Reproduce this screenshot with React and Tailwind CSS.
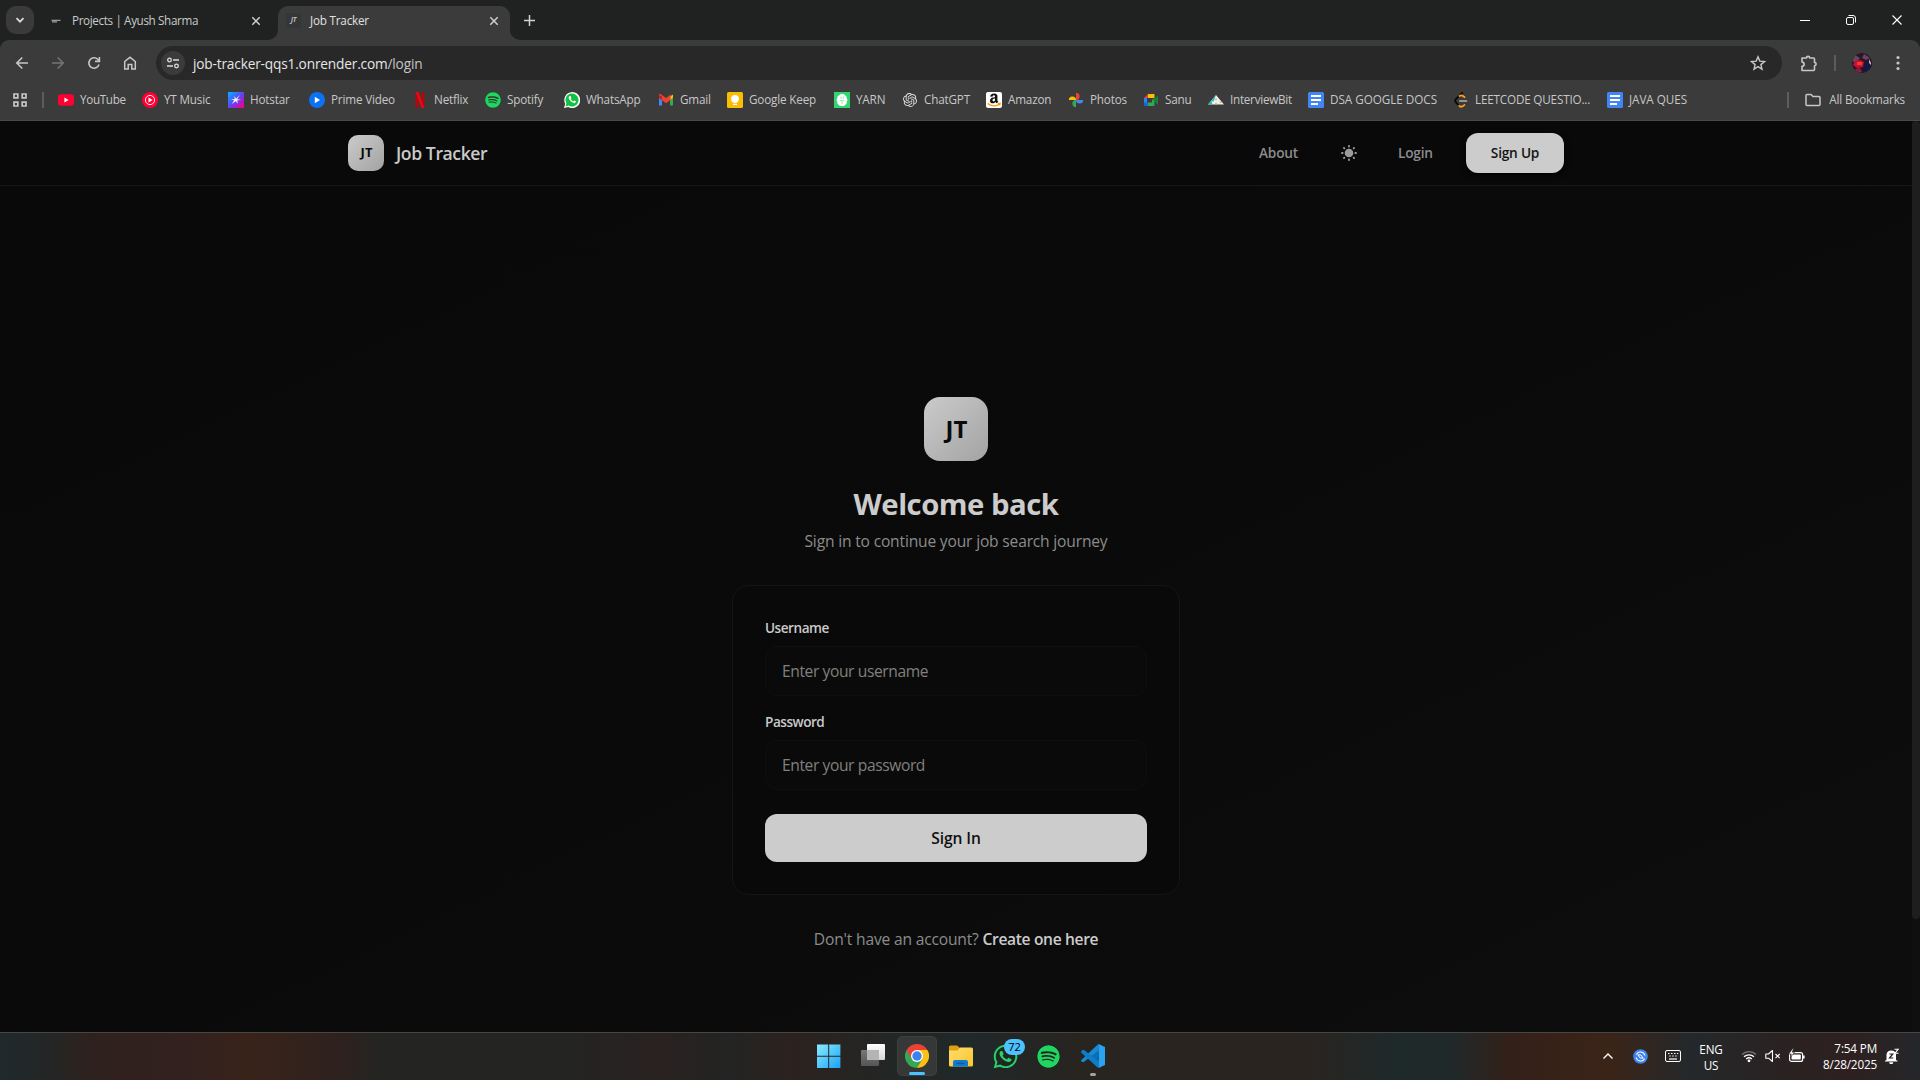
import React from "react";
import { FaSpotify, FaWhatsapp, FaAmazon } from "react-icons/fa";
import { SiOpenai } from "react-icons/si";

const Svg = ({ size = 16, box = size, className = "", children }) => (
  <svg width={size} height={size} viewBox={`0 0 ${box} ${box}`} fill="none" className={`shrink-0 ${className}`}>
    {children}
  </svg>
);

const CloseIcon = () => (
  <Svg size={10} className="text-[#d0d0d0]">
    <path d="M1.3 1.3l7.4 7.4M8.7 1.3L1.3 8.7" stroke="currentColor" strokeWidth="1.5" />
  </Svg>
);

function TabStrip() {
  return (
    <div className="flex h-10 items-end bg-[#202221] text-[11.7px] tracking-[-0.2px] text-[#c9cbca]">
      <button className="mb-[6px] ml-[6px] flex size-7 items-center justify-center rounded-[10px] bg-[#3a3a3a]">
        <Svg size={10}><path d="M1.5 3.2L5 6.7l3.5-3.5" stroke="#dcdcdc" strokeWidth="1.7" /></Svg>
      </button>
      <div className="flex h-[34px] w-[244px] items-center pb-[5px]">
        <Svg size={16} className="ml-[14px]">
          <path d="M3.5 7.3h9M4 8.8h5" stroke="#9a9a9a" strokeWidth="1.2" />
        </Svg>
        <span className="ml-[8px] flex-1 tracking-[-0.37px]">Projects | Ayush Sharma</span>
        <span className="mr-[17px]"><CloseIcon /></span>
      </div>
      <div className="relative flex h-[34px] w-[232px] items-center rounded-t-[10px] bg-[#3b3b3b] pb-[5px] text-[#e0e0e0]">
        <Svg size={10} className="absolute bottom-0 left-[-10px]"><path d="M10 0v10H0A10 10 0 0 0 10 0z" fill="#3b3b3b" /></Svg>
        <Svg size={10} className="absolute right-[-10px] bottom-0"><path d="M0 0v10h10A10 10 0 0 1 0 0z" fill="#3b3b3b" /></Svg>
        <span className="ml-[8px] flex size-[15px] items-center justify-center rounded-[2px] bg-[#343638] text-[7px] font-bold text-[#b8b8b8] italic">JT</span>
        <span className="ml-[9px] flex-1">Job Tracker</span>
        <span className="mr-[11px]"><CloseIcon /></span>
      </div>
      <span className="mb-[14px] ml-[14px]">
        <Svg size={11}><path d="M5.5 0v11M0 5.5h11" stroke="#d0d0d0" strokeWidth="1.5" /></Svg>
      </span>
      <div className="ml-auto flex h-10 items-center">
        <span className="flex w-[46px] justify-center"><Svg size={10}><path d="M0 5.5h10" stroke="#fff" /></Svg></span>
        <span className="flex w-[46px] justify-center">
          <Svg size={10}>
            <rect x=".5" y="2.5" width="7" height="7" rx="1.5" stroke="#fff" />
            <path d="M2.5 .5H7A2.5 2.5 0 0 1 9.5 3v4.5" stroke="#fff" />
          </Svg>
        </span>
        <span className="flex w-[46px] justify-center"><Svg size={10}><path d="M.5 .5l9 9M9.5 .5l-9 9" stroke="#fff" strokeWidth="1.1" /></Svg></span>
      </div>
    </div>
  );
}

function Toolbar() {
  return (
    <div className="bg-[#202221]">
      <div className="flex h-[46px] items-center rounded-t-[9px] bg-[#3b3b3b] text-[#c7c7c7]">
        <Svg size={14} className="ml-[15px]"><path d="M13 7H2M7.3 1.5L1.8 7l5.5 5.5" stroke="currentColor" strokeWidth="1.6" /></Svg>
        <Svg size={14} className="ml-[22px] text-[#757575]"><path d="M1 7h11M6.7 1.5L12.2 7l-5.5 5.5" stroke="currentColor" strokeWidth="1.6" /></Svg>
        <Svg size={14} className="ml-[22px]">
          <path d="M12 8.6A5.2 5.2 0 1 1 10.7 3.3L12.3 5" stroke="currentColor" strokeWidth="1.6" />
          <path d="M12.4 1v4.4H8" stroke="currentColor" strokeWidth="1.6" />
        </Svg>
        <Svg size={14} className="ml-[22px]">
          <path d="M1.7 5.5L7 1.3l5.3 4.2V13H8.8V8.6H5.2V13H1.7z" stroke="currentColor" strokeWidth="1.5" />
        </Svg>
        <div className="ml-[19px] flex h-[34px] w-[1626px] items-center rounded-full bg-[#282828]">
          <span className="ml-[5px] flex size-6 items-center justify-center rounded-full bg-[#3b3b3b]">
            <Svg size={14}>
              <circle cx="3.5" cy="4" r="1.8" stroke="#dedede" strokeWidth="1.3" />
              <path d="M7 4h6M1 10h6" stroke="#dedede" strokeWidth="1.4" />
              <circle cx="10.5" cy="10" r="1.8" stroke="#dedede" strokeWidth="1.3" />
            </Svg>
          </span>
          <span className="ml-[8px] flex-1 pt-px text-[13.7px] leading-5 tracking-[-0.18px] text-[#e6e6e6]">
            job-tracker-qqs1.onrender.com<span className="text-[#c4c4c4]">/login</span>
          </span>
          <Svg size={16} className="mr-[16px]">
            <path d="M8 1.8l1.8 4.3 4.7.4-3.6 3.1 1.1 4.6L8 11.7l-4 2.5 1.1-4.6L1.5 6.5l4.7-.4z" stroke="currentColor" strokeWidth="1.4" />
          </Svg>
        </div>
        <Svg size={18} className="mb-px ml-[18px]">
          <path d="M2 4h4.5a1.6 1.6 0 0 1 3.2 0H13.5a1 1 0 0 1 1 1v3.5a1.6 1.6 0 0 1 0 3.2V15.500a1 1 0 0 1-1 1H2v-4.200a2.100 2.100 0 0 0 0-4.200z" stroke="currentColor" strokeWidth="1.6" strokeLinejoin="round" />
        </Svg>
        <span className="ml-[16px] h-4 w-[2px] bg-[#5c5c5c]" />
        <Svg size={20} className="ml-[16px] overflow-hidden rounded-full">
          <rect width="20" height="20" fill="#2c1429" />
          <path d="M3 2l5 3-4 5-4-2zM12 1l6 4-4 2-4-2z" fill="#63465f" />
          <path d="M3 8l5-1 4 2-1 5-6 1-4-3z" fill="#c5122c" />
          <path d="M5 9h5v3H5z" fill="#ff3534" />
          <path d="M12 11l6-3 2 6-6 5-4-2z" fill="#14193e" />
          <path d="M3 16l5-1 2 4-5 1z" fill="#8f1b45" />
          <path d="M17 6l2 4v2l-2-2z" fill="#c9b4d6" />
        </Svg>
        <Svg size={16} className="ml-[18px]">
          <circle cx="8" cy="2.5" r="1.6" fill="currentColor" />
          <circle cx="8" cy="8" r="1.6" fill="currentColor" />
          <circle cx="8" cy="13.5" r="1.6" fill="currentColor" />
        </Svg>
      </div>
    </div>
  );
}

const icons = {
  youtube: (
    <Svg size={16}><rect y="2.3" width="16" height="11.4" rx="3" fill="#ff0033" /><path d="M6.4 5.6v4.8L10.6 8z" fill="#fff" /></Svg>
  ),
  ytmusic: (
    <Svg size={16}><circle cx="8" cy="8" r="8" fill="#ff0033" /><circle cx="8" cy="8" r="4.6" stroke="#fff" strokeWidth=".9" /><path d="M6.5 5.5v5L10.7 8z" fill="#fff" /></Svg>
  ),
  hotstar: (
    <Svg size={16}>
      <defs>
        <linearGradient id="hs" x1="0" y1="0" x2="1" y2="1"><stop stopColor="#00b4ff" /><stop offset=".5" stopColor="#5b46f5" /><stop offset=".8" stopColor="#c40fb8" /><stop offset="1" stopColor="#ff0070" /></linearGradient>
      </defs>
      <rect width="16" height="16" fill="url(#hs)" />
      <path d="M12 3L9.2 7.3l4 .5-4 .7.8 3.3-2.3-2.6-3.9 2.900 2.300-3.800L2.800 7.400l3.900-.4L6.300 4l1.800 2.400z" fill="#f1ecff" />
    </Svg>
  ),
  prime: (
    <Svg size={16}><circle cx="8" cy="8" r="8" fill="#0b72f5" /><path d="M5.8 4.8v6.4L11 8z" fill="#fff" /></Svg>
  ),
  netflix: (
    <Svg size={16}><path d="M3.5 0h3v16h-3zM9.5 0h3v16h-3z" fill="#b1060f" /><path d="M3.5 0h3l6 16h-3z" fill="#e50914" /></Svg>
  ),
  spotify: (
    <span className="flex size-4 rounded-full bg-[#2b3a2f]"><FaSpotify size={16} color="#1ed760" /></span>
  ),
  whatsapp: (
    <Svg size={16}>
      <path d="M0 16l1.2-4.2A8 8 0 1 1 4.3 15z" fill="#fff" />
      <path d="M1.5 14.5l.9-3.2a6.5 6.5 0 1 1 2.3 2.3z" fill="#12c143" />
      <path d="M5.5 4.2c-1.3.8-1 2.6.6 4.4 1.9 2.1 4 3.1 5.1 2.2.8-.6.8-1.3.6-1.5L10.2 8.5l-.9.9C8.3 9 7.3 8 6.8 7l.7-.8-.7-1.8c-.3-.4-1-.4-1.3-.2z" fill="#fff" />
    </Svg>
  ),
  gmail: (
    <Svg size={16}>
      <path d="M1 4v9.5h3V7.2z" fill="#4285f4" />
      <path d="M15 4v9.5h-3V7.2z" fill="#34a853" />
      <path d="M12 4.6L15 2.6v3.2l-3 2.3z" fill="#fbbc04" />
      <path d="M1 3.2c0-1.2 1.3-1.5 2.2-.8L8 6l4.5-3.4v5.5L8 11.3 4 8.3 1 6z" fill="#ea4335" />
      <path d="M1 3.2v2.7l3 2.3V4z" fill="#c5221f" />
    </Svg>
  ),
  keep: (
    <Svg size={16}><rect width="16" height="16" rx="1.5" fill="#fbbc04" /><circle cx="8" cy="6.8" r="3.9" fill="#fff" /><path d="M6.2 9h3.6v1.6H6.2zM6 11.8h4v1.3H6z" fill="#fff" /></Svg>
  ),
  yarn: (
    <Svg size={16}>
      <rect width="16" height="16" fill="#32d670" />
      <path d="M6 2.5l1.2-.8.8.8 1-.8 1.2.8 2.3 2 .4 2.5.9 1-.9 1-.4 2.7-2.5 2.3H6l-2.5-2.3L3.1 9l-.9-1 .9-1 .4-2.5z" fill="#fff" />
      <path d="M7 4.5v2.5M9.3 4.5v2.5M5.8 8.5h4.5M8 9v3" stroke="#7fe6a5" strokeWidth=".8" />
    </Svg>
  ),
  chatgpt: <span className="flex size-4 items-center justify-center"><SiOpenai size={14} color="#e0e0e0" /></span>,
  amazon: (
    <Svg size={16}>
      <rect width="16" height="16" rx="2" fill="#fff" />
      <FaAmazon size={15} x={0.5} y={0.5} color="#111" />
      <path d="M.5 11.8c4 3.2 10 3.4 14 .5" stroke="#fff" strokeWidth="3.4" />
      <path d="M1.6 11.5c3.5 2.8 8.7 3 11.7.8M11.8 11.3h2.2l-.5 2" stroke="#ff9900" strokeWidth="1.3" />
    </Svg>
  ),
  photos: (
    <Svg size={16}>
      <path d="M8 .8A3.6 3.6 0 0 1 8 8z" fill="#ea4335" />
      <path d="M15.2 8A3.6 3.6 0 0 1 8 8z" fill="#4285f4" />
      <path d="M8 15.2A3.6 3.6 0 0 1 8 8z" fill="#34a853" />
      <path d="M.8 8A3.6 3.6 0 0 1 8 8z" fill="#fbbc04" />
    </Svg>
  ),
  meet: (
    <Svg size={16}>
      <path d="M1 6h3v5H1z" fill="#2684fc" />
      <path d="M1 6l4-4v4z" fill="#ea4335" />
      <path d="M5 2h6.5v4H5z" fill="#fbbc04" />
      <path d="M1 10.5h4V14H2a1 1 0 0 1-1-1z" fill="#1967d2" />
      <path d="M5 10.5h4V8l2.5-2v7a1 1 0 0 1-1 1H5z" fill="#34a853" />
      <path d="M10 8l5-4.5v9.5z" fill="#188038" />
    </Svg>
  ),
  interviewbit: (
    <Svg size={16}>
      <path d="M8 3l8 9.5H0z" fill="#e8f0f0" />
      <path d="M8 3L0 12.5h3.5L6 8.5z" fill="#28b8b5" />
      <path d="M7 7.5l1-1.5 1 1.5-1 1zM6.5 12.5L8 10.5l1.5 2zM11.5 10l1-.8 1.5 1.8h-2z" fill="#f2a65a" />
      <path d="M3.5 9.5l2-.5-1 3z" fill="#e8f0f0" />
    </Svg>
  ),
  leetcode: (
    <Svg size={16}>
      <path d="M9.2 1L3 7c-1.1 1.1-1.1 2.4 0 3.500l3 3.200" stroke="#0a0a0a" strokeWidth="1.8" strokeLinecap="round" />
      <path d="M6.5 4c1.700-1.400 3-.8 5 1.200M6.200 13.800c1.900 1.700 3.300 1.200 5.200-.8" stroke="#ffa116" strokeWidth="1.8" strokeLinecap="round" />
      <path d="M6.800 9h6.800" stroke="#b3b3b3" strokeWidth="1.500" strokeLinecap="round" />
    </Svg>
  ),
  docs: (
    <Svg size={16}>
      <rect width="16" height="16" rx="1.5" fill="#4285f4" />
      <path d="M3 4h10M3 8h10M3 12h7" stroke="#fff" strokeWidth="1.9" />
    </Svg>
  ),
};

const bookmarks = [
  ["youtube", "YouTube", "w-[84px] tracking-[-0.34px]"],
  ["ytmusic", "YT Music", "w-[86px]"],
  ["hotstar", "Hotstar", "w-[81px]"],
  ["prime", "Prime Video", "w-[103px]"],
  ["netflix", "Netflix", "w-[73px]"],
  ["spotify", "Spotify", "w-[79px]"],
  ["whatsapp", "WhatsApp", "w-[94px]"],
  ["gmail", "Gmail", "w-[69px]"],
  ["keep", "Google Keep", "w-[107px]"],
  ["yarn", "YARN", "w-[68px]"],
  ["chatgpt", "ChatGPT", "w-[84px]"],
  ["amazon", "Amazon", "w-[82px]"],
  ["photos", "Photos", "w-[75px]"],
  ["meet", "Sanu", "w-[65px]"],
  ["interviewbit", "InterviewBit", "w-[100px] tracking-[-0.26px]"],
  ["docs", "DSA GOOGLE DOCS", "w-[145px] tracking-[-0.03px]"],
  ["leetcode", "LEETCODE QUESTIO...", "w-[154px] tracking-[-0.18px]"],
  ["docs", "JAVA QUES", "w-[90px] tracking-[-0.05px]"],
];

function BookmarksBar() {
  return (
    <div className="flex h-[35px] items-center border-b border-[#4a4a4a] bg-[#3b3b3b] pb-[6px] text-[11.7px] tracking-[-0.17px] whitespace-nowrap text-[#c7c7c7]">
      <Svg size={14} className="ml-[13px]">
        <path d="M1 1h3.8v3.8H1zM9.2 1H13v3.8H9.2zM1 9.2h3.8V13H1zM9.2 9.2H13V13H9.2z" stroke="currentColor" strokeWidth="1.7" />
      </Svg>
      <span className="mr-[14px] ml-[15px] h-4 w-[2px] bg-[#5c5c5c]" />
      {bookmarks.map(([icon, label, width]) => (
        <div key={label} className={`flex shrink-0 items-center gap-[6px] ${width}`}>
          {icons[icon]}
          <span>{label}</span>
        </div>
      ))}
      <span className="ml-auto h-4 w-[2px] bg-[#5c5c5c]" />
      <Svg size={16} className="ml-[16px]">
        <path d="M1 3.5a1 1 0 0 1 1-1h4l2 2h6a1 1 0 0 1 1 1v7a1 1 0 0 1-1 1H2a1 1 0 0 1-1-1z" stroke="currentColor" strokeWidth="1.5" />
      </Svg>
      <span className="mr-[15px] ml-[8px]">All Bookmarks</span>
    </div>
  );
}

function Sun() {
  return (
    <Svg size={16}>
      <circle cx="8" cy="8" r="4.3" fill="#9c9c9c" />
      <g stroke="#9c9c9c" strokeWidth="1.9" strokeLinecap="round">
        <path d="M8 1v.6M8 14.4v.6M1 8h.6M14.4 8h.6M3 3l.3.3M12.700 12.700l.3.3M3 13l.3-.3M12.700 3.300L13 3" />
      </g>
    </Svg>
  );
}

function SiteHeader() {
  return (
    <header className="h-[65px] border-b border-[#161616] bg-[#090909]">
      <div className="mx-auto flex h-16 max-w-7xl items-center px-8">
        <div className="flex size-9 items-center justify-center rounded-[10px] bg-linear-to-br from-[#cbcbcb] to-[#a3a3a3] pl-px text-[13px] font-bold text-[#0a0a0a]">JT</div>
        <span className="ml-3 pt-px text-[17.6px] font-semibold tracking-[-0.42px] text-[#cacaca]">Job Tracker</span>
        <nav className="ml-auto flex items-center text-[13.7px] leading-5 font-semibold tracking-[-0.22px] text-[#8c8c8c]">
          <a className="w-[40px]">About</a>
          <span className="ml-[42px]"><Sun /></span>
          <a className="ml-[41px] w-[36px]">Login</a>
          <a className="ml-8 flex h-10 w-[98px] items-center justify-center rounded-xl bg-[#cccccc] text-[#141414] shadow-[0_2px_6px_#000]">Sign Up</a>
        </nav>
      </div>
    </header>
  );
}

function Field({ label, placeholder, type }) {
  return (
    <label className="flex flex-col gap-2">
      <span className="text-[13.6px] leading-5 font-semibold tracking-[-0.48px] text-[#cacaca]">{label}</span>
      <input
        type={type}
        placeholder={placeholder}
        className="h-[50px] rounded-xl border border-[#0f0f0f] bg-[#0a0a0a] px-4 text-[15.6px] tracking-[-0.4px] placeholder:text-[#808080]"
      />
    </label>
  );
}

function LoginPage() {
  return (
    <div className="flex h-[911px] bg-[#0a0a0a]">
      <div className="flex-1 bg-linear-to-br from-[#090909] via-[#0a0a0a] to-[#0d0d0d]">
        <SiteHeader />
        <main className="mx-auto flex w-[448px] flex-col items-center pt-[211px] text-[15.6px] leading-6 tracking-[-0.18px]">
          <div className="flex size-16 items-center justify-center rounded-2xl bg-linear-to-br from-[#cbcbcb] to-[#a3a3a3] pl-px text-2xl font-bold tracking-normal text-[#0a0a0a]">JT</div>
          <h1 className="mt-[25px] text-[29.3px] leading-9 font-bold tracking-[-0.5px] text-[#cccccc]">Welcome back</h1>
          <p className="mt-[7px] text-[#8c8c8c]">Sign in to continue your job search journey</p>
          <form className="mt-8 flex w-full flex-col gap-4 rounded-2xl border border-[#151515] bg-[#090909] p-8">
            <Field label="Username" placeholder="Enter your username" type="text" />
            <Field label="Password" placeholder="Enter your password" type="password" />
            <button type="button" className="mt-2 h-12 rounded-xl bg-[#cccccc] font-semibold tracking-[-0.1px] text-[#111111]">Sign In</button>
          </form>
          <p className="mt-8 text-[#8c8c8c]">
            Don't have an account? <a className="font-semibold tracking-[-0.35px] text-[#cccccc]">Create one here</a>
          </p>
        </main>
      </div>
      <div className="w-2 bg-[#0f0f0f]">
        <div className="h-[798px] rounded-sm bg-[#1e1e1e]" />
      </div>
    </div>
  );
}

function Taskbar() {
  return (
    <footer className="flex h-12 items-center border-t border-[#484644] bg-[linear-gradient(90deg,#1f292c_0px,#242625_50px,#2f211d_95px,#32211f_180px,#38231a_250px,#2e211e_340px,#242523_380px,#242423_570px,#292221_660px,#232423_730px,#2c221f_790px,#232624_880px,#202829_970px,#282420_1080px,#2a2420_1300px,#1e292a_1400px,#20292a_1450px,#332019_1510px,#3b2418_1610px,#24282a_1690px,#2a2222_1780px,#2e2020_1850px,#24272a_1920px)] pb-px text-[11.7px] tracking-[-0.15px] text-white">
      <div className="flex flex-1 items-center pl-[817px]">
        <Svg size={24}>
          <defs><linearGradient id="win" x1="0" y1="0" x2="1" y2="1"><stop stopColor="#8bebff" /><stop offset="1" stopColor="#1aa3f5" /></linearGradient></defs>
          <path d="M0 .5h11.2v11.2H0zM12.2 .5h11.2v11.2H12.2zM0 12.7h11.2v11.2H0zM12.2 12.7h11.2v11.2H12.2z" fill="url(#win)" />
        </Svg>
        <Svg size={24} className="ml-5">
          <defs>
            <linearGradient id="tv" x1="0" y1="0" x2="0" y2="1"><stop stopColor="#ffffff" /><stop offset="1" stopColor="#d6d6d6" /></linearGradient>
            <linearGradient id="tg" x1="0" y1="0" x2="0" y2="1"><stop stopColor="#777777" /><stop offset="1" stopColor="#555555" /></linearGradient>
          </defs>
          <rect y="6" width="18" height="16" rx="1" fill="url(#tg)" />
          <rect x="6" width="18" height="16" rx="1" fill="url(#tv)" />
          <rect x="6" y="6" width="12" height="10" fill="#b4b4b4" />
        </Svg>
        <div className="relative ml-3 flex size-10 items-center justify-center rounded-[5px] border border-[#3d403f] bg-[#353837]">
          <Svg size={24} box={48}>
            <path d="M24 24L3.2 12A24 24 0 0 1 44.8 12z" fill="#ea4335" />
            <path d="M24 24L3.2 12A24 24 0 0 0 24 48l10.4-18z" fill="#34a853" />
            <path d="M24 12h20.8A24 24 0 0 1 24 48l10.4-18z" fill="#fbc116" />
            <path d="M3.2 12L13.6 30 24 12z" fill="#ea4335" />
            <circle cx="24" cy="24" r="12" fill="#fff" /><circle cx="24" cy="24" r="9.4" fill="#3b82f0" />
          </Svg>
          <span className="absolute bottom-0 h-[3px] w-4 rounded-full bg-[#4cc2ff]" />
        </div>
        <Svg size={24} className="ml-3">
          <defs><linearGradient id="fd" x1="0" y1="0" x2="1" y2="1"><stop stopColor="#ffdc70" /><stop offset="1" stopColor="#fcc52c" /></linearGradient></defs>
          <path d="M0 3a1.5 1.5 0 0 1 1.5-1.5H8L11 4v4H0z" fill="#e0a010" />
          <path d="M0 6.5h8.5L11 3.5h11.5A1.5 1.5 0 0 1 24 5v16a1.5 1.5 0 0 1-1.5 1.5h-21A1.5 1.5 0 0 1 0 21z" fill="url(#fd)" />
          <path d="M4 22.5V18a2 2 0 0 1 2-2h11a2 2 0 0 1 2 2v4.5z" fill="#0f7bd0" />
          <path d="M7.5 19.5h8" stroke="#0b5a9e" strokeWidth="1.3" />
        </Svg>
        <div className="relative ml-5 flex size-6 items-center justify-center text-[#25d366]">
          <FaWhatsapp size={27} className="shrink-0" />
          <span className="absolute top-[-5px] left-[11px] flex h-4 w-[21px] items-center justify-center rounded-full bg-[#4cc2ff] text-[11px] text-black">72</span>
        </div>
        <FaSpotify size={23} className="ml-[20px] shrink-0 rounded-full text-[#1ed760]" />
        <div className="relative ml-[21px] flex h-10 w-6 items-center">
          <Svg size={24}>
            <path d="M17.5 0L7.5 9.5 2.5 5.7.3 6.8 0 8.2 16.5 23.5z" fill="#0a6fb8" />
            <path d="M0 16.2L17.5 0v6.5L2.5 18.3.3 17.5z" fill="#1688d4" />
            <path d="M0 8.2L2.5 5.7 17.5 17.3V24z" fill="#0d7cc9" />
            <path d="M17.5 0L24 3v18l-6.5 3z" fill="#27a3f2" />
          </Svg>
          <span className="absolute bottom-0 left-[9px] h-[3px] w-[6px] rounded-full bg-[#a3a3a3]" />
        </div>
      </div>
      <Svg size={12}><path d="M1.5 8.5L6 4l4.5 4.5" stroke="#fff" strokeWidth="1.4" /></Svg>
      <Svg size={15} className="ml-[19px]">
        <circle cx="7.5" cy="7.5" r="7.3" fill="#3f83ee" />
        <path d="M3.3 5.5A4.6 4.6 0 0 1 11.9 6.5M3.1 8.5A4.6 4.6 0 0 0 11.7 9.5" stroke="#fff" strokeWidth="1.1" />
        <path d="M4.8 5.8l3 .2L10.2 9.2l-3-.2z" stroke="#fff" />
      </Svg>
      <Svg size={16} className="ml-[17px]">
        <rect x=".5" y="2.5" width="15" height="11" rx="1.5" stroke="#fff" />
        <path d="M3 5.5h1.5M6 5.5h1.5M9 5.5h1.5M12 5.5h1.2M4.2 8h1.5M7.2 8h1.5M10.2 8h1.5" stroke="#fff" strokeWidth="1.2" />
        <path d="M4 11h8" stroke="#fff" strokeWidth="1.2" />
      </Svg>
      <div className="ml-[16px] flex w-[28px] flex-col items-center pt-px leading-4">
        <span>ENG</span><span>US</span>
      </div>
      <Svg size={16} className="ml-[16px]">
        <path d="M1 6.5a10 10 0 0 1 14 0" stroke="#777" strokeWidth="1.3" />
        <path d="M3 8.8a7.2 7.2 0 0 1 10 0M5.2 11a4.2 4.2 0 0 1 5.6 0" stroke="#fff" strokeWidth="1.3" />
        <circle cx="8" cy="12.8" r="1.4" fill="#fff" />
      </Svg>
      <Svg size={16} className="ml-[8px]">
        <path d="M.8 6v4.2h2.7L7.5 13.5v-11L3.5 6z" stroke="#fff" strokeWidth="1.1" strokeLinejoin="round" />
        <path d="M10.5 6l4.2 4.2M14.7 6l-4.2 4.2" stroke="#fff" strokeWidth="1.1" />
      </Svg>
      <Svg size={17} className="ml-[7px]">
        <rect x="1.6" y="4.6" width="13" height="8.8" rx="2" stroke="#fff" strokeWidth="1.2" />
        <rect x="3.5" y="6.5" width="9.3" height="5" rx=".8" fill="#fff" />
        <path d="M15.8 7.5v3" stroke="#fff" strokeWidth="1.6" />
        <path d="M4.5 .8L.8 6h2.5L2.3 9.5 6.5 4.3H4.2L5.5.8z" fill="#fff" stroke="#2a2222" strokeWidth=".6" />
      </Svg>
      <div className="ml-[14px] flex w-[58px] flex-col items-end leading-4 whitespace-nowrap">
        <span>7:54 PM</span><span>8/28/2025</span>
      </div>
      <Svg size={16} className="mr-[20px] ml-[7px]">
        <path d="M2.5 12V6.5a4.8 4.8 0 0 1 9.5 0V12l1.5.8v.8H1v-.8zM5.2 14.3h4a2 2 0 0 1-4 0z" fill="#fff" />
        <path d="M5.3 6h3.5l-3.3 4h3.8" stroke="#222" strokeWidth="1.2" />
        <path d="M10.5 1.2h3.7l-3.2 4h3.5" stroke="#fff" strokeWidth="1.1" />
      </Svg>
    </footer>
  );
}

export default function App() {
  return (
    <div className="flex h-[1080px] w-[1920px] flex-col overflow-hidden bg-[#0a0a0a] font-['Open_Sans','Noto_Sans',sans-serif]">
      <TabStrip />
      <Toolbar />
      <BookmarksBar />
      <LoginPage />
      <Taskbar />
    </div>
  );
}
